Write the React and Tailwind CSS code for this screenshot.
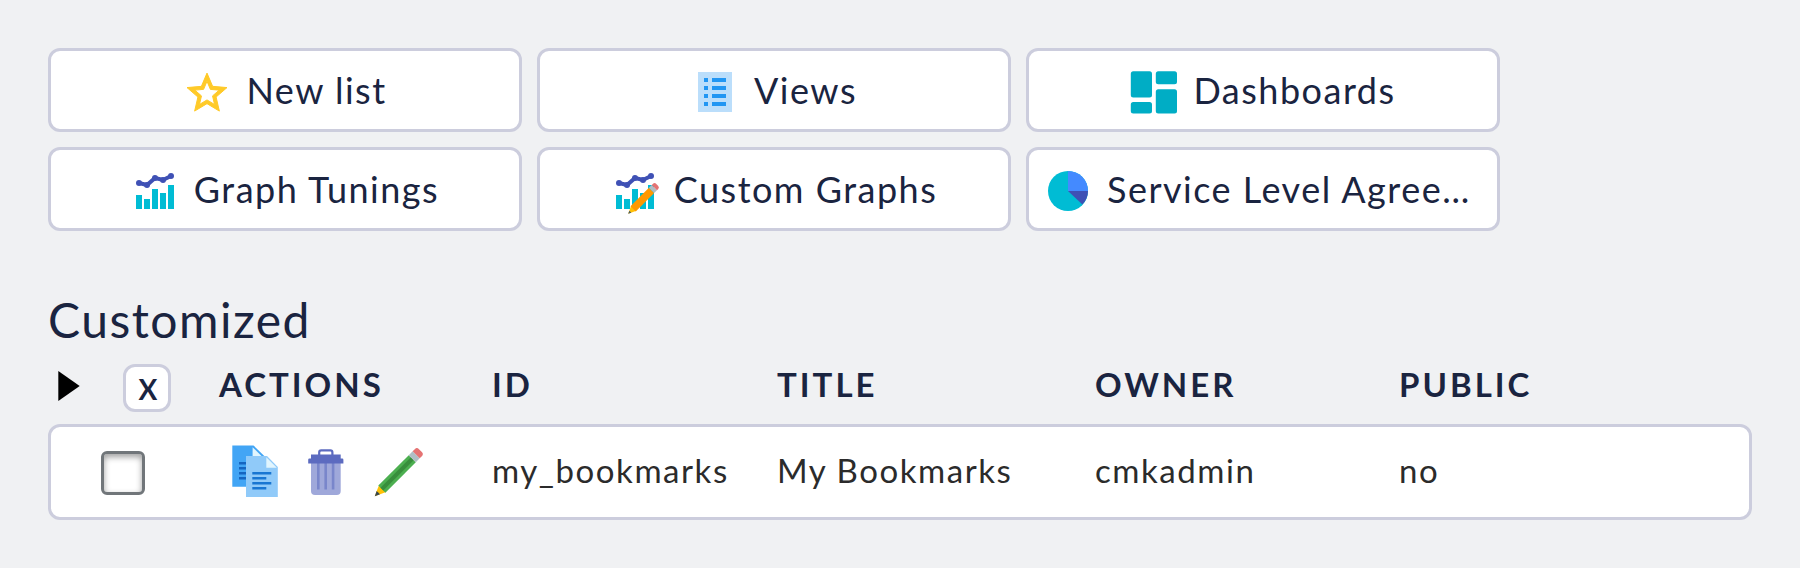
import React from "react";

const svgProps = { className: "block h-12 w-12 shrink-0 translate-y-0.5 overflow-visible", viewBox: "0 0 48 48" };

function StarIcon() {
  return (
    <svg {...svgProps}>
      <g transform="translate(0 1.1) scale(2)">
        <path fill="#ffca28" stroke="#ffca28" strokeWidth="0.5" d="M22 9.24l-7.19-.62L12 2 9.19 8.63 2 9.24l5.46 4.73L5.82 21 12 17.27 18.18 21l-1.63-7.03L22 9.24zM12 15.4l-3.76 2.27 1-4.28-3.32-2.88 4.38-.38L12 6.1l1.71 4.04 4.38.38-3.32 2.88 1 4.28L12 15.4z" />
      </g>
    </svg>
  );
}

function ListIcon() {
  return (
    <svg {...svgProps}>
      <path fill="#bbdefb" d="M7 4h34v40H7z" />
      {[10, 18, 26, 34].map((y) => (
        <g key={y} fill="#2196f3">
          <rect x="13" y={y} width="4" height="4" />
          <rect x="21" y={y} width="14" height="4" />
        </g>
      ))}
    </svg>
  );
}

function DashboardIcon() {
  return (
    <svg {...svgProps}>
      <g fill="#00adc5">
        <rect x="0.8" y="3.200" width="21.200" height="26.200" rx="2.500" />
        <rect x="0.8" y="34" width="21.200" height="11.400" rx="2.500" />
        <rect x="25.800" y="3.200" width="21.200" height="13" rx="2.500" />
        <rect x="25.800" y="21.200" width="21.200" height="24.200" rx="2.500" />
      </g>
    </svg>
  );
}

function GraphShapes() {
  return (
    <>
      <path fill="#00bcd4" d="M5 28h6v14H5zM13 32h6v10h-6zM21 22h6v20h-6zM29 26h6v16h-6zM37 18h6v24h-6z" />
      <path fill="none" stroke="#3f51b5" strokeWidth="4" d="M8 16l8 2 8-7 8 2 8-4" />
      <g fill="#3f51b5">
        <circle cx="8" cy="16" r="3" />
        <circle cx="16" cy="18" r="3" />
        <circle cx="24" cy="11" r="3" />
        <circle cx="32" cy="13" r="3" />
        <circle cx="40" cy="9" r="3" />
      </g>
    </>
  );
}

function GraphIcon() {
  return (
    <svg {...svgProps}>
      <GraphShapes />
    </svg>
  );
}

function CustomGraphIcon() {
  return (
    <svg {...svgProps}>
      <GraphShapes />
      <g transform="translate(17.2 46.8) rotate(-45)">
        <path fill="#ffc107" d="M0 0L8 -3.7V3.7z" />
        <path fill="#455a64" d="M0 0L3 -1.4V1.4z" />
        <path fill="#ff9800" d="M7 -3.7H33V3.7H7z" />
        <path fill="#b0bec5" d="M33 -3.7H37V3.7H33z" />
        <path fill="#e57373" d="M37 -3.7H38.5a2.5 2.5 0 0 1 2.5 2.5V1.2a2.5 2.5 0 0 1 -2.5 2.5H37z" />
      </g>
    </svg>
  );
}

function PieIcon() {
  return (
    <svg {...svgProps}>
      <circle cx="24" cy="24" r="20" fill="#00bcd4" />
      <path fill="#448aff" d="M24 4a20 20 0 0 1 20 20H24z" />
      <path fill="#3f51b5" d="M24 24h20c0 5-2 9.900-5.600 13.500z" />
    </svg>
  );
}

function CopyIcon() {
  return (
    <svg className="block h-15 w-15" viewBox="0 0 60 60">
      <path fill="#42a5f5" d="M7.300 4.400H28.500L39.300 15V45.700H7.300z" />
      <path fill="#e1f5fe" d="M27.600 6.200V15.500H37z" />
      <path fill="#1565c0" d="M14 21h8v2.400h-8zM14 26h8v2.400h-8zM14 31h8v2.400h-8zM14 36h8v2.400h-8z" />
      <path fill="#90caf9" d="M21 15H42L52.800 26V56H21z" />
      <path fill="#e1f5fe" d="M41.300 16.200V26.800H51.800z" />
      <path fill="#1976d2" d="M27.300 31h19v2.400h-19zM27.300 36h14v2.400h-14zM27.300 41h19v2.400h-19zM27.300 46h14v2.400h-14z" />
    </svg>
  );
}

function TrashIcon() {
  return (
    <svg className="block h-15 w-15" viewBox="0 0 60 60">
      <path fill="#9fa8da" d="M14 21H43.700V50a4 4 0 0 1 -4 4H18a4 4 0 0 1 -4 -4z" />
      <path fill="#7986cb" d="M20 21h2.600v27.500H20zM27.400 21h2.600v27.500h-2.600zM34.800 21h2.600v27.500h-2.600z" />
      <path fill="none" stroke="#5c6bc0" strokeWidth="2.200" d="M22.200 14V11.400a2 2 0 0 1 2 -2H33.400a2 2 0 0 1 2 2V14" />
      <path fill="#5c6bc0" d="M14 13.600H43.700V17.600H45.200a1.200 1.200 0 0 1 1.200 1.200V22.400H11.200V18.800a1.200 1.200 0 0 1 1.200 -1.200H14z" />
    </svg>
  );
}

function PencilIcon() {
  return (
    <svg className="block h-15 w-15" viewBox="0 0 60 60">
      <g transform="translate(5.800 55.200) rotate(-45)">
        <path fill="#ffc107" d="M0 0L11 -5V5z" />
        <path fill="#37474f" d="M0 0L5 -2.400V2.400z" />
        <path fill="#4caf50" d="M10 -5H53V5H10z" />
        <path fill="#388e3c" d="M10 -2H53V2H10z" />
        <path fill="#b0bec5" d="M53 -5H58.500V5H53z" />
        <path fill="#e57373" d="M58.500 -5H61.500a3 3 0 0 1 3 3V2a3 3 0 0 1 -3 3H58.500z" />
      </g>
    </svg>
  );
}

const links = [
  { label: "New list", Icon: StarIcon },
  { label: "Views", Icon: ListIcon },
  { label: "Dashboards", Icon: DashboardIcon },
  { label: "Graph Tunings", Icon: GraphIcon },
  { label: "Custom Graphs", Icon: CustomGraphIcon },
  { label: "Service Level Agree…", Icon: PieIcon, justify: "justify-start" },
];

export default function App() {
  return (
    <main className="flex h-[568px] w-[1800px] flex-col overflow-hidden bg-[#f0f1f3] p-12 font-['Lato',sans-serif] text-[#1a2440]">
      <nav className="grid w-[1452px] grid-cols-3 gap-[15px]">
        {links.map(({ label, Icon, justify = "justify-center" }) => (
          <button
            key={label}
            className={`flex h-[84px] items-center gap-[15px] rounded-xl border-3 border-[#cccddd] bg-white px-[15px] text-[36px] leading-[44px] tracking-[1.5px] whitespace-nowrap ${justify}`}
          >
            <Icon />
            <span>{label}</span>
          </button>
        ))}
      </nav>

      <h3 className="mt-[60px] text-[48px] leading-[58px] tracking-[1.5px]">Customized</h3>

      <div className="mt-[15px] grid h-[60px] grid-cols-[75px_96px_273px_285px_318px_304px_1fr] text-[33px] leading-[40px] font-bold tracking-[3px]">
        <svg className="mt-[7px] ml-2.5 block h-[30px] w-[22px]" viewBox="0 0 22 30">
          <path d="M0.300 0L21.700 15L0.300 30z" fill="#000" />
        </svg>
        <button className="flex h-12 w-12 items-center justify-center rounded-xl border-3 border-[#cccddd] bg-white pt-0.5 pl-[5px] text-[28px] leading-[34px]">
          X
        </button>
        <span>ACTIONS</span>
        <span>ID</span>
        <span>TITLE</span>
        <span>OWNER</span>
        <span>PUBLIC</span>
      </div>

      <div className="grid h-24 shrink-0 grid-cols-[168px_273px_285px_318px_304px_1fr] items-center rounded-xl border-3 border-[#cccddd] bg-white pb-0.5 text-[33px] leading-[42px] tracking-[1.55px] text-[#2b2b2b]">
        <span className="mt-1 ml-[50px] h-11 w-11 rounded-md border-3 border-[#71767a] bg-white shadow-[inset_0_3px_6px_rgba(0,0,0,0.38)]" />
        <div className="ml-1.5 flex gap-3">
          <CopyIcon />
          <TrashIcon />
          <PencilIcon />
        </div>
        <span className="pb-0.5">my_bookmarks</span>
        <span className="pb-0.5">My Bookmarks</span>
        <span className="pb-0.5">cmkadmin</span>
        <span className="pb-0.5">no</span>
      </div>
    </main>
  );
}
